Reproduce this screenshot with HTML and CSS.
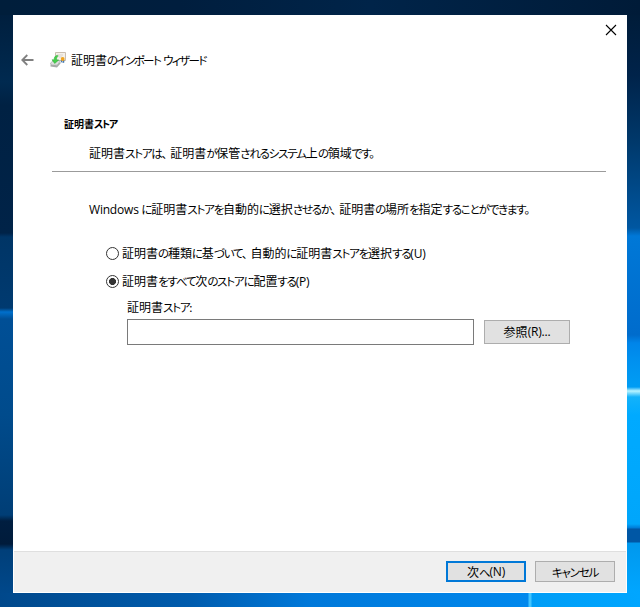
FILE: index.html
```html
<!DOCTYPE html>
<html lang="ja">
<head>
<meta charset="utf-8">
<title>証明書のインポート ウィザード</title>
<link rel="stylesheet" href="styles.css">
</head>
<body>
<div class="desktop">
  <div class="wall left"></div>
  <main class="window">
    <div class="caption">
      <svg class="close" width="10" height="10" viewBox="0 0 10 10"><path d="M0 0L10 10M10 0L0 10"/></svg>
    </div>
    <header class="titlebar">
      <svg class="back" width="13" height="12" viewBox="0 0 13 12"><path d="M12.5 6H1.5M6.3 1L1.3 6l5 5"/></svg>
      <svg class="app-icon" width="16" height="16" viewBox="0 0 16 16">
        <path fill="#f4f0e9" stroke="#c9bdb0" d="M5.5.5h10v8h-10z"/>
        <path stroke="#d9d2ca" d="M8 3h5M9 5h3"/>
        <path fill="#dedede" stroke="#a5aaa7" stroke-width=".7" d="M.5 11l3-2.5h7l-3 4.5-6 .5z"/>
        <path fill="#a6aaa8" d="M.5 12.5l6.5.8 3.5-3.8v2L7 15.5l-6.5-1z"/>
        <path fill="#45cf4b" stroke="#2ba733" stroke-width=".5" d="M7.3 3.2C4.8 4.1 4 5.5 4.2 7.8H2l2.7 3.7 4-3.5-2.1-.2c-.2-1.7.2-2.8 1.7-3.7z"/>
        <path fill="#4778ad" d="M11 8h1.5v3L11 10zm2 0h1.3v2.5L13 11z"/>
        <circle cx="12.7" cy="7" r="1.9" fill="#f0a31c"/>
      </svg>
      <h1>証明書<span>のインポート ウィザード</span></h1>
    </header>
    <section class="intro">
      <h2>証明書<span>ストア</span></h2>
      <p class="subtitle">証明書<span class="pause">ストアは、</span>証明書<span>が</span>保管<span>されるシステム</span>上<span>の</span>領域<span>です。</span></p>
    </section>
    <section class="content">
      <p class="lead"><i>Windows</i> <span>に</span>証明書<span>ストアを</span>自動的<span>に</span>選択<span class="pause">させるか、</span>証明書<span>の</span>場所<span>を</span>指定<span>することができます。</span></p>
      <div class="option first"><b class="radio"></b><p>証明書<span>の</span>種類<span>に</span>基<span class="pause">づいて、</span>自動的<span>に</span>証明書<span>ストアを</span>選択<span>する</span><i>(U)</i></p></div>
      <div class="option second"><b class="radio checked"></b><p>証明書<span>をすべて</span>次<span>のストアに</span>配置<span>する</span><i>(P)</i></p></div>
      <p class="label">証明書<span>ストア:</span></p>
      <div class="store"><div class="field"></div><div class="button browse">参照<i>(R)...</i></div></div>
    </section>
    <footer>
      <div class="button next">次<span>へ</span><i>(N)</i></div>
      <div class="button cancel"><span>キャンセル</span></div>
    </footer>
  </main>
  <div class="wall right"></div>
</div>
</body>
</html>
```
FILE: styles.css
```css
* { box-sizing: border-box; }
body { margin: 0; font: 12px/16px "Noto Sans CJK JP", sans-serif; color: #000; }
h1, h2, p { margin: 0; font-size: 12px; font-weight: 400; white-space: nowrap; }
span { font-size: 11.5px; font-feature-settings: "palt"; letter-spacing: -1.2px; }
i { font-family: "Open Sans", sans-serif; font-style: normal; letter-spacing: -.2px; }
svg { display: block; fill: none; }
.pause { margin-right: 4px; }
.desktop {
  display: grid;
  grid-template-columns: 13px 614px 13px;
  width: 640px; height: 607px; padding-top: 15px;
  background:
    linear-gradient(90deg, #00488b, #005cae 30%, #0078d9 48%, #0088ed 528px, #40c4ff 529px, #40c4ff 531px, #009df6 532px, #00a6ff) 0 593px / 640px 14px no-repeat,
    linear-gradient(90deg, #001e3b, #001e3e 28%, #002449 58%, #001b38);
}
.wall { height: 578px; }
.left { background: linear-gradient(#001f3e 0, #002a50 67px, #002143 90px, #002348 218px, #003566 222px, #003a70 293px, #0070cc 297px, #004f96 304px, #004b8c 400px, #003e76 500px, #001e40 506px, #001b3b 529px, #003f79 535px, #00488b 578px); }
.right { background: linear-gradient(#001c39 0, #00234a 60px, #00386a 125px, #0057a1 213px, #0078d7 221px, #006ccc 320px, #0085e9 328px, #0091ef 346px, #009df4 372px, #b8f4ff 376px, #13b2fa 382px, #00aaff 400px, #00a6fb 509px, #007ad5 513px, #0057a5 514px, #0057a5 527px, #0098ed 528px, #00a6ff 578px); }
.window { display: flex; flex-direction: column; width: 614px; height: 578px; background: #fff; }
.caption { display: flex; justify-content: flex-end; height: 30px; padding: 10px 11px 0 0; }
.close { stroke: #000; stroke-width: 1.1; overflow: visible; }
.titlebar { display: flex; align-items: center; height: 30px; padding-left: 8px; }
.back { stroke: #808080; stroke-width: 1.8; }
.app-icon { margin: 0 5px 0 16px; }
h1 span { letter-spacing: -1.6px; word-spacing: 2px; }
.intro { height: 97px; margin: 0 21px 0 39px; padding-top: 41px; border-bottom: 1px solid #9b9b9b; }
h2 { margin-left: 12px; height: 16px; font-size: 10px; font-weight: 700; }
h2 span { font-size: 10px; letter-spacing: -1.5px; }
.subtitle { margin: 13px 0 0 37px; }
.content { flex: 1; }
.lead { margin: 29px 0 0 76px; }
.option { display: flex; align-items: center; height: 16px; padding-left: 93px; gap: 3px; }
.first { margin-top: 27px; }
.second { margin-top: 12px; }
.radio { width: 13px; height: 13px; border: 1px solid #333; border-radius: 50%; }
.checked { background: radial-gradient(circle, #333 3.2px, #fff 3.8px); }
.label { margin: 10px 0 0 114px; }
.store { display: flex; align-items: center; gap: 10px; margin: 4px 0 0 114px; }
.field { width: 347px; height: 26px; border: 1px solid #7a7a7a; }
.button { display: flex; align-items: center; justify-content: center; width: 80px; height: 21px; background: #e1e1e1; border: 1px solid #adadad; white-space: nowrap; }
.browse { width: 86px; height: 24px; }
footer { display: flex; justify-content: flex-end; gap: 9px; height: 41px; margin: 0 1px 1px; padding: 9px 11px 0 0; background: #f0f0f0; border-top: 1px solid #dfdfdf; }
.next { border: 2px solid #0078d7; }
```
